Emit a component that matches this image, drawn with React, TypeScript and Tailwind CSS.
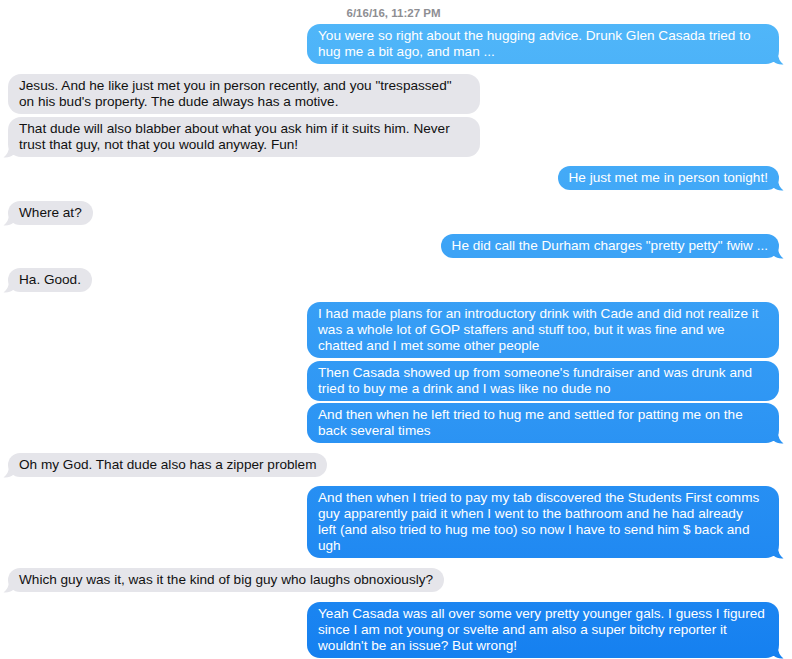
import React from "react";

type Msg = { me: boolean; text: string; tail?: boolean; mt: number; wide?: boolean };

const msgs: Msg[] = [
  { me: true, mt: 4, wide: true, tail: true, text: "You were so right about the hugging advice. Drunk Glen Casada tried to\nhug me a bit ago, and man ..." },
  { me: false, mt: 10, wide: true, text: "Jesus. And he like just met you in person recently, and you \"trespassed\"\non his bud's property. The dude always has a motive." },
  { me: false, mt: 3, wide: true, tail: true, text: "That dude will also blabber about what you ask him if it suits him. Never\ntrust that guy, not that you would anyway. Fun!" },
  { me: true, mt: 9, tail: true, text: "He just met me in person tonight!" },
  { me: false, mt: 11, tail: true, text: "Where at?" },
  { me: true, mt: 9, tail: true, text: "He did call the Durham charges \"pretty petty\" fwiw ..." },
  { me: false, mt: 10, tail: true, text: "Ha. Good." },
  { me: true, mt: 10, wide: true, text: "I had made plans for an introductory drink with Cade and did not realize it\nwas a whole lot of GOP staffers and stuff too, but it was fine and we\nchatted and I met some other people" },
  { me: true, mt: 3, wide: true, text: "Then Casada showed up from someone's fundraiser and was drunk and\ntried to buy me a drink and I was like no dude no" },
  { me: true, mt: 2, wide: true, tail: true, text: "And then when he left tried to hug me and settled for patting me on the\nback several times" },
  { me: false, mt: 10, tail: true, text: "Oh my God. That dude also has a zipper problem" },
  { me: true, mt: 9, wide: true, tail: true, text: "And then when I tried to pay my tab discovered the Students First comms\nguy apparently paid it when I went to the bathroom and he had already\nleft (and also tried to hug me too) so now I have to send him $ back and\nugh" },
  { me: false, mt: 10, tail: true, text: "Which guy was it, was it the kind of big guy who laughs obnoxiously?" },
  { me: true, mt: 10, wide: true, tail: true, text: "Yeah Casada was all over some very pretty younger gals. I guess I figured\nsince I am not young or svelte and am also a super bitchy reporter it\nwouldn't be an issue? But wrong!" },
];

const mtClass: Record<number, string> = {
  2: "mt-[2px]",
  3: "mt-[3px]",
  4: "mt-[4px]",
  9: "mt-[9px]",
  10: "mt-[10px]",
  11: "mt-[11px]",
};

function Bubble({ m }: { m: Msg }) {
  const blue = "bg-fixed bg-gradient-to-b from-[#52b8f9] to-[#1580f0] text-white";
  const gray = "bg-[#e5e5ea] text-[#111]";
  return (
    <div className={`flex ${m.me ? "justify-end" : "justify-start"} ${mtClass[m.mt]}`}>
      <div
        className={`relative whitespace-pre-line rounded-[13px] px-[11px] py-1 text-[13.6px] leading-4 ${m.me ? blue : gray} ${m.wide ? "w-[472px]" : ""}`}
      >
        {m.text}
        {m.tail && m.me && (
          <div className={`absolute bottom-[-1px] right-[-5px] h-[12px] w-[12px] ${blue} [clip-path:path('M0,0_L6,0_C6,5_8,9_11.5,11.5_C7,12_4,10.5_2,9_L0,9_Z')]`} />
        )}
        {m.tail && !m.me && (
          <div className={`absolute bottom-[-1px] left-[-5px] h-[12px] w-[12px] ${gray} [clip-path:path('M12,0_L6,0_C6,5_4,9_0.5,11.5_C5,12_8,10.5_10,9_L12,9_Z')]`} />
        )}
      </div>
    </div>
  );
}

export default function App() {
  return (
    <div
      className="h-[659px] w-[792px] overflow-hidden bg-white pl-[8px] pr-[13px] pt-[6px]"
      style={{ fontFamily: '"Liberation Sans", Arial, sans-serif' }}
    >
      <div className="h-[14px] text-center text-[11.5px] font-bold leading-[14px] text-[#8e8e93]">
        6/16/16, 11:27 PM
      </div>
      {msgs.map((m, i) => (
        <Bubble key={i} m={m} />
      ))}
    </div>
  );
}
